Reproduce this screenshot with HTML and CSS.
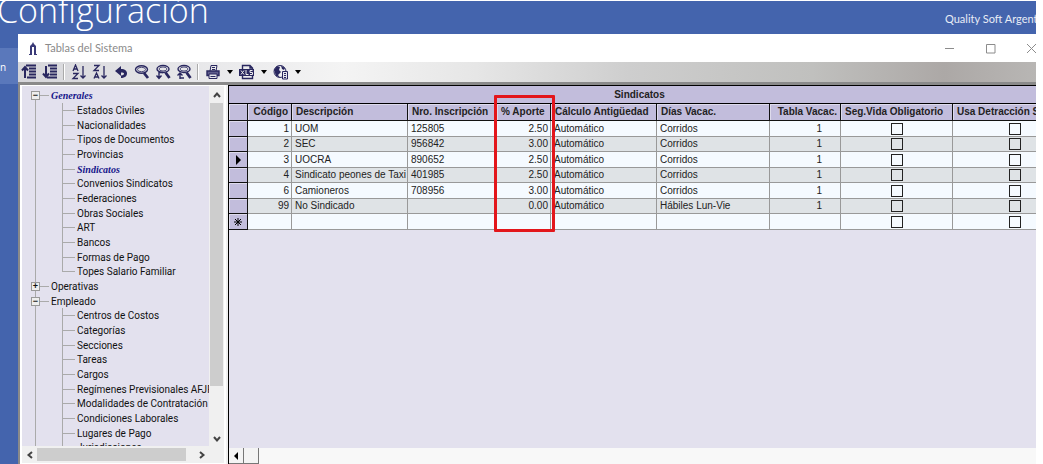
FILE: index.html
```html
<!DOCTYPE html>
<html lang="es">
<head>
<meta charset="utf-8">
<title>Tablas del Sistema</title>
<link rel="stylesheet" href="styles.css">
</head>
<body>
<div class="app">
  <header class="topbar">
    <h1 class="page-title">Configuración</h1>
    <span class="company">Quality Soft Argentina</span>
  </header>
  <div class="workspace">
    <nav class="rail"><a class="rail-item" href="#">n</a></nav>
    <main class="window">
      <div class="titlebar">
        <svg class="logo" viewBox="0 0 8 13"><path d="M4 0L5 2L7 4V12H5V5H3V12H1V4L3 2Z" fill="#3a3a78"/><path d="M0 12.500H3M5 12.500H8" stroke="#3a3a78"/></svg>
        <h2 class="window-title">Tablas del Sistema</h2>
        <button class="win-btn" aria-label="Minimizar"><svg viewBox="0 0 11 11"><path d="M1 5.500H10"/></svg></button>
        <button class="win-btn" aria-label="Maximizar"><svg viewBox="0 0 11 11"><path d="M1.500 1.500H10V10H1.500Z"/></svg></button>
        <button class="win-btn" aria-label="Cerrar"><svg viewBox="0 0 11 11"><path d="M1 1L10 10M10 1L1 10"/></svg></button>
      </div>
      <div class="toolbar">
        <button class="tool" aria-label="Contraer"><svg viewBox="0 0 16 16"><path d="M4 14V3M1 6.500L4 3L7 6.500" stroke-width="2"/><path d="M5 1.500H15M8 4.500H15M8 7.500H15M8 10.500H15M6 13.500H15" stroke-width="2"/></svg></button>
        <button class="tool" aria-label="Expandir"><svg viewBox="0 0 16 16"><path d="M4 2V13M1 9.500L4 13L7 9.500" stroke-width="2"/><path d="M6 1.500H15M8 4.500H15M8 7.500H15M8 10.500H15M5 13.500H15" stroke-width="2"/></svg></button>
        <span class="sep"></span>
        <button class="tool" aria-label="Orden ascendente"><svg viewBox="0 0 16 16"><path d="M2 7L4.500 1L7 7M3 5H6M2 9.500H7L2 14.500H7M12 2V14M9.500 11.500L12 14L14.500 11.500" stroke-width="1.300"/></svg></button>
        <button class="tool" aria-label="Orden descendente"><svg viewBox="0 0 16 16"><path d="M2 1.500H7L2 6.500H7M2 14.500L4.500 9L7 14.500M3 13H6M12 2V14M9.500 11.500L12 14L14.500 11.500" stroke-width="1.300"/></svg></button>
        <button class="tool" aria-label="Deshacer"><svg viewBox="0 0 16 16"><path d="M2 7L8 2V5C12 5 14 7 14 9.500C14 12.500 11 14 8 14V11.500C10 11.500 11 10.500 11 9.500C11 8.500 9.500 8.500 8 8.500V12Z" fill="#29275f" stroke="none"/></svg></button>
        <button class="tool" aria-label="Buscar"><svg viewBox="0 0 16 16"><ellipse cx="7.500" cy="5.500" rx="6" ry="3.800" stroke-width="1.400"/><ellipse cx="7.500" cy="5.500" rx="4" ry="2.200" stroke-width="0.800"/><path d="M10 9L14 14" stroke-width="2.800"/></svg></button>
        <button class="tool" aria-label="Buscar siguiente"><svg viewBox="0 0 16 16"><ellipse cx="8" cy="5" rx="6" ry="3.500" stroke-width="1.400"/><ellipse cx="8" cy="5" rx="4" ry="2" stroke-width="0.800"/><path d="M10.500 8.500L14.500 14" stroke-width="2.800"/><path d="M4 8V14M1.500 11.500L4 14.500L6.500 11.500M4 8.500H8" stroke-width="1.400"/></svg></button>
        <button class="tool" aria-label="Buscar anterior"><svg viewBox="0 0 16 16"><ellipse cx="8" cy="5" rx="6" ry="3.500" stroke-width="1.400"/><ellipse cx="8" cy="5" rx="4" ry="2" stroke-width="0.800"/><path d="M10.500 8.500L14.500 14" stroke-width="2.800"/><path d="M4 15V9M1.500 11.500L4 9L6.500 11.500M4 14H8" stroke-width="1.400"/></svg></button>
        <span class="sep"></span>
        <button class="tool" aria-label="Imprimir"><svg viewBox="0 0 16 16"><path d="M5 7L6 1.500H12L11 7M7 3.500H10M7 5.500H10"/><path d="M2 7H14V11.500H2Z" fill="#5f5d8c" stroke-width="1.400"/><path d="M4 10H12V14.500H4Z" fill="#e6e6ec"/><path d="M5.500 12.500H10.500"/></svg></button>
        <button class="tool caret" aria-label="Opciones de impresión"></button>
        <button class="tool" aria-label="Exportar a XLS"><svg viewBox="0 0 16 16"><path d="M3.500 5V1.500H11L13.500 4V14.500H3.500V12M11 1.500V4H13.500" stroke-width="1.400"/><path d="M0 5H15V12H0Z" fill="#29275f" stroke="none"/><path d="M2 6.500L5 10.500M5 6.500L2 10.500M7 6V10.500H9.500M13.500 6.500H11V8.500H13.500V10.500H11" stroke="#eee"/></svg></button>
        <button class="tool caret" aria-label="Opciones de exportación"></button>
        <button class="tool" aria-label="Exportar a web"><svg viewBox="0 0 16 16"><circle cx="7" cy="7.500" r="6"/><path d="M1 6L4 2L7 3L6 6L8 8L5 11L7 13.500L3 12Z" fill="#29275f" stroke="none"/><path d="M8 1.500L12 4L11 6L9 5Z" fill="#29275f" stroke="none"/><path d="M9.500 7.500H14.500V15H9.500Z" fill="#e6e6ec"/><path d="M11 9.500H13M11 11.500H13M11 13.500H13"/></svg></button>
        <button class="tool caret" aria-label="Opciones web"></button>
      </div>
      <div class="content">
        <aside class="side">
          <div class="tree-area">
            <ul class="tree">
              <li class="root"><span class="box">−</span><a class="active" href="#">Generales</a></li>
              <li class="leaf"><a href="#">Estados Civiles</a></li>
              <li class="leaf"><a href="#">Nacionalidades</a></li>
              <li class="leaf"><a href="#">Tipos de Documentos</a></li>
              <li class="leaf"><a href="#">Provincias</a></li>
              <li class="leaf"><a class="active" href="#">Sindicatos</a></li>
              <li class="leaf"><a href="#">Convenios Sindicatos</a></li>
              <li class="leaf"><a href="#">Federaciones</a></li>
              <li class="leaf"><a href="#">Obras Sociales</a></li>
              <li class="leaf"><a href="#">ART</a></li>
              <li class="leaf"><a href="#">Bancos</a></li>
              <li class="leaf"><a href="#">Formas de Pago</a></li>
              <li class="leaf last"><a href="#">Topes Salario Familiar</a></li>
              <li class="root"><span class="box">+</span><a href="#">Operativas</a></li>
              <li class="root"><span class="box">−</span><a href="#">Empleado</a></li>
              <li class="leaf"><a href="#">Centros de Costos</a></li>
              <li class="leaf"><a href="#">Categorías</a></li>
              <li class="leaf"><a href="#">Secciones</a></li>
              <li class="leaf"><a href="#">Tareas</a></li>
              <li class="leaf"><a href="#">Cargos</a></li>
              <li class="leaf"><a href="#">Regímenes Previsionales AFJP</a></li>
              <li class="leaf"><a href="#">Modalidades de Contratación</a></li>
              <li class="leaf"><a href="#">Condiciones Laborales</a></li>
              <li class="leaf"><a href="#">Lugares de Pago</a></li>
              <li class="leaf"><a href="#">Jurisdicciones</a></li>
            </ul>
            <div class="vscroll">
              <button aria-label="Subir"><svg viewBox="0 0 8 8"><path d="M1 6L4 2.500L7 6"/></svg></button>
              <div class="vthumb"></div>
              <button aria-label="Bajar"><svg viewBox="0 0 8 8"><path d="M1 2L4 5.500L7 2"/></svg></button>
            </div>
          </div>
          <div class="hscroll">
            <button aria-label="Izquierda"><svg viewBox="0 0 8 8"><path d="M6 1L2.500 4L6 7"/></svg></button>
            <div class="hthumb"></div>
            <button aria-label="Derecha"><svg viewBox="0 0 8 8"><path d="M2 1L5.500 4L2 7"/></svg></button>
          </div>
        </aside>
        <section class="grid-pane">
          <div class="grid-view">
            <div class="caption" id="cap">Sindicatos</div>
            <table class="grid" aria-labelledby="cap">
              <colgroup><col class="c-mark"><col class="c-code"><col class="c-desc"><col class="c-reg"><col class="c-rate"><col class="c-calc"><col class="c-days"><col class="c-tab"><col class="c-life"><col class="c-ded"></colgroup>
              <thead><tr><th></th><th class="num">Código</th><th>Descripción</th><th>Nro. Inscripción</th><th>% Aporte</th><th>Cálculo Antigüedad</th><th>Días Vacac.</th><th class="num">Tabla Vacac.</th><th>Seg.Vida Obligatorio</th><th>Usa Detracción SIPA</th></tr></thead>
              <tbody>
                <tr><th></th><td class="num">1</td><td>UOM</td><td>125805</td><td class="num">2.50</td><td>Automático</td><td>Corridos</td><td class="tab">1</td><td class="chk"><input type="checkbox" aria-label="Seg.Vida UOM"></td><td class="chk"><input type="checkbox" aria-label="Detracción UOM"></td></tr>
                <tr><th></th><td class="num">2</td><td>SEC</td><td>956842</td><td class="num">3.00</td><td>Automático</td><td>Corridos</td><td class="tab">1</td><td class="chk"><input type="checkbox" aria-label="Seg.Vida SEC"></td><td class="chk"><input type="checkbox" aria-label="Detracción SEC"></td></tr>
                <tr><th><svg class="mark" viewBox="0 0 10 10"><path d="M3 0L8 5L3 10Z" fill="#000"/></svg></th><td class="num">3</td><td>UOCRA</td><td>890652</td><td class="num">2.50</td><td>Automático</td><td>Corridos</td><td class="tab">1</td><td class="chk"><input type="checkbox" aria-label="Seg.Vida UOCRA"></td><td class="chk"><input type="checkbox" aria-label="Detracción UOCRA"></td></tr>
                <tr><th></th><td class="num">4</td><td>Sindicato peones de Taxi</td><td>401985</td><td class="num">2.50</td><td>Automático</td><td>Corridos</td><td class="tab">1</td><td class="chk"><input type="checkbox" aria-label="Seg.Vida Taxi"></td><td class="chk"><input type="checkbox" aria-label="Detracción Taxi"></td></tr>
                <tr><th></th><td class="num">6</td><td>Camioneros</td><td>708956</td><td class="num">3.00</td><td>Automático</td><td>Corridos</td><td class="tab">1</td><td class="chk"><input type="checkbox" aria-label="Seg.Vida Camioneros"></td><td class="chk"><input type="checkbox" aria-label="Detracción Camioneros"></td></tr>
                <tr><th></th><td class="num">99</td><td>No Sindicado</td><td></td><td class="num">0.00</td><td>Automático</td><td>Hábiles Lun-Vie</td><td class="tab">1</td><td class="chk"><input type="checkbox" aria-label="Seg.Vida No Sindicado"></td><td class="chk"><input type="checkbox" aria-label="Detracción No Sindicado"></td></tr>
                <tr><th><svg class="mark" viewBox="0 0 10 10"><path d="M5 1V9M1 5H9M2 2L8 8M8 2L2 8" stroke="#000"/></svg></th><td></td><td></td><td></td><td></td><td></td><td></td><td></td><td class="chk"><input type="checkbox" aria-label="Seg.Vida nuevo"></td><td class="chk"><input type="checkbox" aria-label="Detracción nuevo"></td></tr>
              </tbody>
            </table>
            <div class="highlight"></div>
          </div>
          <div class="grid-scroll">
            <button aria-label="Desplazar a la izquierda"><svg viewBox="0 0 8 8"><path d="M6 0V8L2 4Z" fill="#000"/></svg></button>
            <div class="classic-thumb"></div>
          </div>
        </section>
      </div>
    </main>
  </div>
</div>
</body>
</html>
```
FILE: styles.css
```css
* { box-sizing: border-box; }
body { margin: 0; padding: 1px 7px 0 0; height: 100vh; overflow: hidden; background: #fff; font-family: "Liberation Sans", Arial, sans-serif; }
button { border: 0; padding: 0; background: none; display: flex; align-items: center; justify-content: center; }
a { color: inherit; text-decoration: none; }
svg { fill: none; display: block; }

.app { height: 100%; display: flex; flex-direction: column; overflow: hidden; background: #4464ad; }
.topbar { height: 33px; flex: none; display: flex; justify-content: space-between; color: #fff; }
.page-title { margin: -14px 0 0 -3px; font: 300 34px/46px "Open Sans", sans-serif; }
.company { width: 91px; flex: none; white-space: nowrap; overflow: hidden; font: 11px/35px Lato, sans-serif; color: #e8ecf6; }

.workspace { flex: 1; min-height: 0; display: flex; }
.rail { width: 18px; flex: none; padding-top: 14px; }
.rail-item { display: block; height: 36px; background: #5a78bb; color: #fff; font: 10px/38px "Open Sans", sans-serif; }

.window { flex: 1; min-width: 0; display: flex; flex-direction: column; background: #f0f0f0; }
.titlebar { height: 28px; flex: none; display: flex; align-items: center; background: #fff; padding-left: 11px; overflow: hidden; }
.logo { width: 8px; height: 13px; }
.window-title { flex: 1; margin: 0 0 0 8px; font: 11px/28px Lato, sans-serif; color: #8a8a8a; }
.win-btn { width: 41px; height: 28px; flex: none; }
.win-btn:last-child { margin-right: -16px; }
.win-btn svg { width: 11px; height: 11px; stroke: #8c8c8c; }

.toolbar { height: 20px; flex: none; display: flex; align-items: center; background: linear-gradient(90deg, #d6d6da, #e8e8ea 18%, #f4f4f4 32%, #e6e6e6 45%, #cecece 60%, #c0c0be 78%, #aca8a6 91%, #b8b6b4); }
.tool { width: 21px; height: 20px; flex: none; }
.tool svg { width: 16px; height: 16px; stroke: #29275f; }
.caret { width: 13px; }
.caret::before { content: ""; border: 3px solid transparent; border-top: 4px solid #000; border-bottom: 0; }
.sep { width: 1px; height: 16px; margin: 0 4px 0 3px; background: #aaa; box-shadow: 1px 0 #fff; }

.content { flex: 1; min-height: 0; display: flex; border-top: 3px solid #8a8a8a; border-left: 2px solid #8a8a8a; }
.side { width: 206px; flex: none; display: flex; flex-direction: column; border: 1px solid #fff; border-width: 1px 2px; background: #f0f0f0; }
.tree-area { flex: 1; min-height: 0; display: flex; background: #e3e1ee; }
.tree { flex: 1; min-width: 0; margin: 0; padding: 2px 0 0; list-style: none; overflow: hidden; font-family: Roboto, "Liberation Sans", sans-serif; font-size: 10px; line-height: 15px; color: #111; }
.tree li { height: 15px; display: flex; align-items: center; white-space: nowrap; background: linear-gradient(#aaa, #aaa) 13px 0 / 1px 100% no-repeat; }
.tree li:nth-child(3n) { height: 14px; }
.tree li:first-child { background-position: 13px 8px; }
.tree .root { padding-left: 9px; }
.tree .root::after { content: ""; order: 1; width: 9px; height: 1px; background: #aaa; }
.tree .root a { order: 2; margin-left: 2px; }
.box { width: 9px; height: 9px; flex: none; border: 1px solid #999; background: #eee; font: bold 9px/7px "Liberation Sans", sans-serif; text-align: center; }
.tree .leaf { padding-left: 40px; background: linear-gradient(#aaa, #aaa) 13px 0 / 1px 100% no-repeat, linear-gradient(#aaa, #aaa) 40px 0 / 1px 100% no-repeat; }
.tree .last { background-size: 1px 100%, 1px 8px; }
.leaf::before { content: ""; flex: none; width: 13px; height: 1px; background: #aaa; margin-right: 2px; }
.tree .active { font: italic bold 10px/15px "Liberation Serif", serif; color: #15158a; }

.vscroll { width: 15px; flex: none; display: flex; flex-direction: column; background: #f0f0f0; }
.vscroll button { height: 17px; flex: none; }
.vthumb { flex: 5; margin: 0 1px; background: #cdcdcd; }
.vscroll button:last-child { flex: 1; align-items: flex-end; padding-bottom: 3px; min-height: 17px; }
.hscroll { height: 17px; flex: none; display: flex; align-items: center; padding-right: 15px; }
.hscroll button { width: 15px; flex: none; }
.hthumb { flex: 1; margin-right: 8px; height: 13px; background: #cdcdcd; }
.side svg { width: 8px; height: 8px; stroke: #444; stroke-width: 2; }

.grid-pane { flex: 1; min-width: 0; margin-left: 2px; display: flex; flex-direction: column; border: solid #000; border-width: 1px 0 0 1px; background: #e3e1ee; }
.grid-view { flex: 1; min-height: 0; position: relative; overflow: hidden; font-size: 10px; color: #222; }
.caption { height: 18px; background: #c2bddc; border-bottom: 1px solid #000; text-align: center; font-weight: bold; line-height: 18px; padding-left: 14px; }
.grid { width: 848px; table-layout: fixed; border-collapse: separate; border-spacing: 0; }
.c-mark { width: 19px; } .c-code { width: 44px; } .c-desc { width: 116px; } .c-reg { width: 89px; } .c-rate { width: 54px; }
.c-calc { width: 106px; } .c-days { width: 113px; } .c-tab { width: 71px; } .c-life { width: 112px; } .c-ded { width: 124px; }
.grid th, .grid td { padding: 0 3px; height: 16px; line-height: 14px; white-space: nowrap; overflow: hidden; text-align: left; }
.grid th { background: #c2bddc; border: solid #111; border-width: 0 1px 1px 0; font-weight: bold; box-shadow: inset 1px 1px #dedbec; }
.grid thead th { height: 17px; padding: 0 4px; }
.grid tbody th { padding: 0; }
.grid td { background: #f5faff; border: solid #999; border-width: 0 1px 1px 0; }
.grid tbody tr:nth-child(even) td { background: #dfe3e6; }
.grid tbody tr:nth-child(even) > * { height: 15px; }
.grid .num { text-align: right; padding-right: 2px; }
.grid thead .num { padding-right: 3px; }
.grid .tab { text-align: right; padding-right: 18px; }
.grid .chk { text-align: center; padding: 0; }
.chk input { appearance: none; display: block; margin: 0 auto; width: 12px; height: 12px; border: 1px solid #222; }
.mark { width: 10px; height: 10px; margin: 0 auto; }
.highlight { position: absolute; left: 265px; top: 9px; width: 61px; height: 137px; border: 3px solid #e3161b; border-radius: 1px; }

.grid-scroll { height: 16px; flex: none; display: flex; background: #f8f8f8; }
.grid-scroll button, .classic-thumb { width: 15px; height: 16px; flex: none; background: #f4f4f4; border: solid #777; border-width: 0 1px 1px 0; }
.grid-scroll svg { width: 8px; height: 8px; }
```
